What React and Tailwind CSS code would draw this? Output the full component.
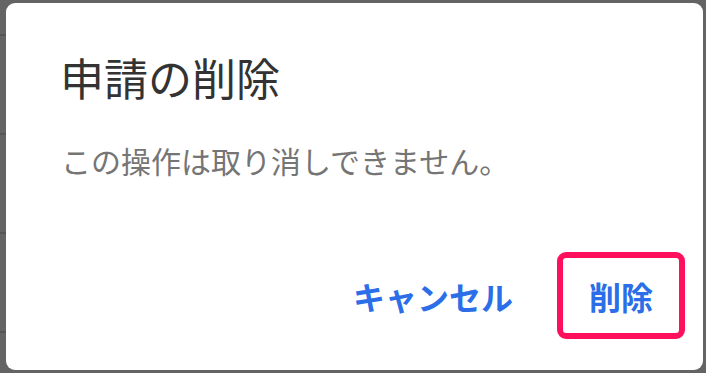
import React from "react";

export default function App() {
  return (
    <div
      className="w-[706px] h-[373px] overflow-hidden bg-[#646464] flex"
      style={{ fontFamily: '"Noto Sans CJK JP", "Noto Sans", sans-serif' }}
    >
      {/* faint list behind the overlay */}
      <div className="w-[6px] shrink-0 flex flex-col pt-[34px] gap-[97px]">
        <div className="h-[2px] bg-[#555]" />
        <div className="h-[2px] bg-[#555]" />
        <div className="h-[2px] bg-[#555]" />
        <div className="h-[2px] bg-[#555]" />
      </div>
      <div className="pt-[3px] pb-[3px]">
        <div className="w-[697px] h-[367px] rounded-[9px] bg-white flex flex-col">
          <div className="pl-[54px] pt-[43px] text-[44px] leading-[62px] text-[#333] font-normal">
            申請の削除
          </div>
          <div className="pl-[55px] pt-[31px] text-[30px] leading-[42px] text-[#757575]">
            この操作は取り消しできません。
          </div>
          <div className="flex justify-end items-center mt-auto mb-[31px] mr-[18px] gap-[44px]">
            <div className="text-[32px] font-bold text-[#2b6ee8] leading-[40px]">キャンセル</div>
            <div className="w-[128px] h-[87px] border-[6px] border-[#ff105c] rounded-[9px] flex items-center justify-center text-[32px] font-bold text-[#2b6ee8]">
              削除
            </div>
          </div>
        </div>
      </div>
    </div>
  );
}
